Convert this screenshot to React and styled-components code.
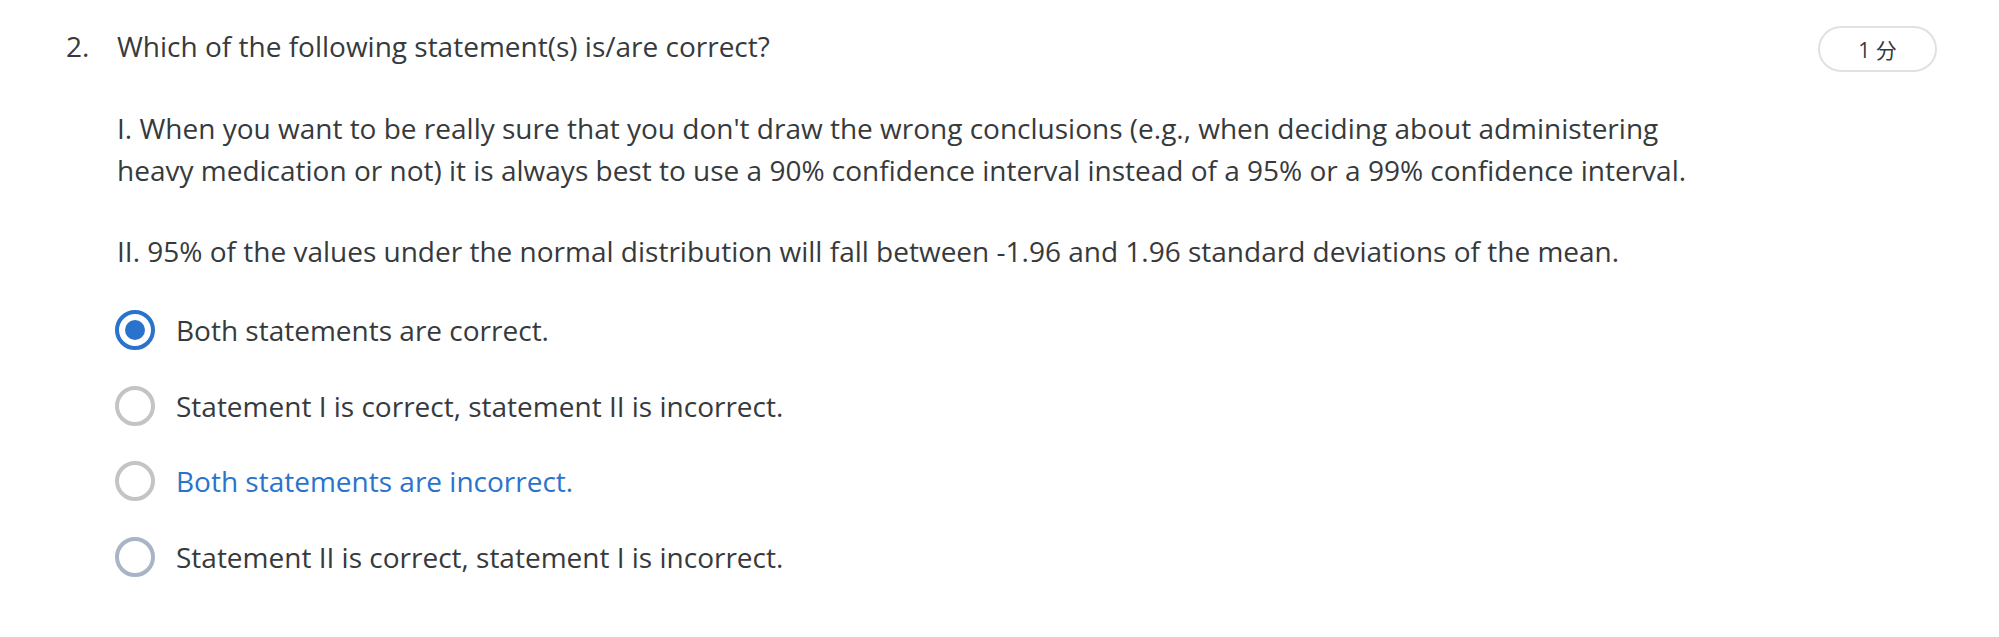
import React from 'react';
import styled, { createGlobalStyle } from 'styled-components';

const GlobalStyle = createGlobalStyle`
  body {
    margin: 0;
    background: #ffffff;
    font-family: "Open Sans", "Noto Sans CJK SC", sans-serif;
    color: #373a3c;
  }
`;

const Page = styled.div`
  padding: 25px 62px 40px 66px;
`;

const Header = styled.div`
  display: flex;
  align-items: flex-start;
  justify-content: space-between;
`;

const QuestionTitle = styled.div`
  display: flex;
  font-size: 28px;
  line-height: 42px;
`;

const Number = styled.span`
  width: 51px;
`;

const Points = styled.div`
  box-sizing: border-box;
  width: 119px;
  height: 46px;
  margin-top: 1px;
  border: 2px solid #e1e1e1;
  border-radius: 23px;
  display: flex;
  align-items: center;
  justify-content: center;
  font-size: 21px;
  color: #373a3c;
`;

const Body = styled.div`
  padding-left: 51px;
  margin-top: 35px;
`;

const Paragraph = styled.p`
  margin: 0 0 39px;
  font-size: 28px;
  line-height: 42px;
`;

const Options = styled.div`
  display: flex;
  flex-direction: column;
  gap: 33.5px;
  margin-top: -2px;
`;

const Option = styled.label`
  display: flex;
  align-items: center;
  gap: 21px;
  font-size: 28px;
  line-height: 42px;
  color: ${p => (p.$hover ? '#2a73cc' : '#373a3c')};
  margin-left: -2px;
`;

const Radio = styled.span`
  box-sizing: border-box;
  width: 40px;
  height: 40px;
  border-radius: 50%;
  border: 4px solid ${p => (p.$checked ? '#2a73cc' : p.$tint || '#c4c4c4')};
  display: flex;
  align-items: center;
  justify-content: center;
  flex-shrink: 0;

  &::after {
    content: '';
    width: 20px;
    height: 20px;
    border-radius: 50%;
    background: #2a73cc;
    display: ${p => (p.$checked ? 'block' : 'none')};
  }
`;

const options = [
  { text: 'Both statements are correct.', checked: true },
  { text: 'Statement I is correct, statement II is incorrect.' },
  { text: 'Both statements are incorrect.', hover: true },
  { text: 'Statement II is correct, statement I is incorrect.', tint: '#a9b5c6' },
];

const App = () => {
  return (
    <Page>
      <GlobalStyle />
      <Header>
        <QuestionTitle>
          <Number>2.</Number>
          <span>Which of the following statement(s) is/are correct?</span>
        </QuestionTitle>
        <Points>1 分</Points>
      </Header>
      <Body>
        <Paragraph>
          I. When you want to be really sure that you don't draw the wrong conclusions (e.g., when deciding about administering
          <br />
          heavy medication or not) it is always best to use a 90% confidence interval instead of a 95% or a 99% confidence interval.
        </Paragraph>
        <Paragraph>
          II. 95% of the values under the normal distribution will fall between -1.96 and 1.96 standard deviations of the mean.
        </Paragraph>
        <Options>
          {options.map(o => (
            <Option key={o.text} $hover={o.hover}>
              <Radio $checked={o.checked} $tint={o.tint} />
              {o.text}
            </Option>
          ))}
        </Options>
      </Body>
    </Page>
  );
};

export default App;
